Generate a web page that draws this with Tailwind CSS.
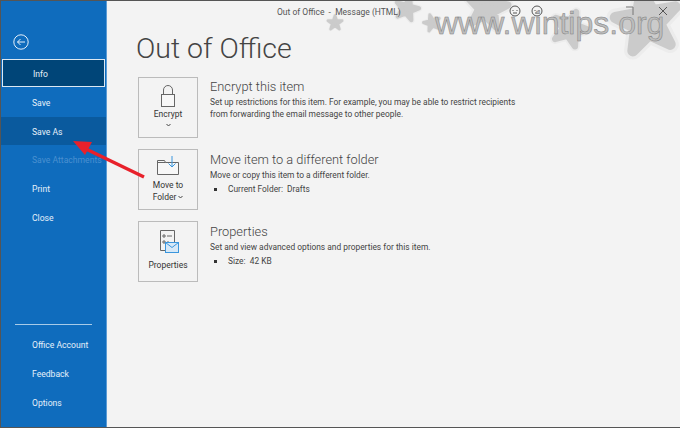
<!DOCTYPE html>
<html lang="en">
<head>
  <meta charset="UTF-8" />
  <title>Out of Office - Message (HTML)</title>
  <script src="https://cdn.jsdelivr.net/npm/@tailwindcss/browser@4"></script>
</head>
<body class="relative w-[680px] h-[428px] overflow-hidden bg-[#555] font-['Roboto',sans-serif] text-[#444]">
  <div class="flex h-[427px] border-t border-[#555] border-l bg-[#f3f3f3]">

    <!-- Sidebar -->
    <aside class="w-[106px] shrink-0 bg-[#0f6cbd] border-r border-[#5a9bd5] flex flex-col text-[8.6px] text-[#e6f0fa]">
      <div class="h-[58px] pt-[33px] pl-[12px]">
        <svg width="16" height="16" viewBox="0 0 16 16" fill="none" stroke="#e6f0fa" stroke-width="1">
          <circle cx="8" cy="8" r="7.2"/>
          <path d="M12 8H4.5M7.5 5L4.5 8l3 3"/>
        </svg>
      </div>
      <div class="mx-[1px] h-[28px] flex items-center pl-[30px] pt-[3px] bg-[#004578] border border-[#dce8f3]">Info</div>
      <div class="h-[30px] flex items-center pl-[31px] pt-[3px]">Save</div>
      <div class="h-[28px] flex items-center pl-[31px] pt-[3px] bg-[#0a5a9e]">Save As</div>
      <div class="h-[29px] flex items-center pl-[31px] pt-[1px] text-[#4a90d0] whitespace-nowrap">Save Attachments</div>
      <div class="h-[29px] flex items-center pl-[31px] pt-[1px]">Print</div>
      <div class="h-[29px] flex items-center pl-[31px] pt-[1px]">Close</div>
      <div class="mt-auto mx-[14px] h-[1px] bg-[#a8cbe8] mb-[5px]"></div>
      <div class="h-[29px] flex items-center pl-[31px] pt-[2px]">Office Account</div>
      <div class="h-[29px] flex items-center pl-[31px] pt-[2px]">Feedback</div>
      <div class="h-[29px] flex items-center pl-[31px] pt-[2px] mb-[10px]">Options</div>
    </aside>

    <!-- Main -->
    <main class="flex-1 pl-[29px]">
      <h1 class="mt-[27px] h-[49px] text-[28.5px] leading-[42px] font-light text-[#444]">Out of Office</h1>

      <section class="flex gap-[12px] h-[72px] ml-[2px]">
        <div class="w-[60px] h-[61px] border border-[#bbb] flex flex-col items-center text-[8.5px] leading-[12px] text-[#333]">
          <svg class="mt-[7px]" width="16" height="22" viewBox="0 0 16 22" fill="none" stroke="#666" stroke-width="1">
            <rect x="1.5" y="9.5" width="13" height="12" fill="#f7f7f7"/>
            <path d="M3.5 9.5V5a4.5 4.5 0 0 1 9 0v4.5"/>
          </svg>
          <span class="mt-[1px]">Encrypt</span>
          <svg width="5" height="4" viewBox="0 0 5 4" fill="none" stroke="#444" class="mt-[3px]"><path d="M.5 1l2 2 2-2"/></svg>
        </div>
        <div class="pt-[2px]">
          <h2 class="text-[12.8px] leading-[18px] font-light mt-[-1px]">Encrypt this item</h2>
          <p class="text-[8.4px] leading-[11.5px] mt-[1px]">Set up restrictions for this item. For example, you may be able to restrict recipients<br>from forwarding the email message to other people.</p>
        </div>
      </section>

      <section class="flex gap-[12px] h-[72px] ml-[2px]">
        <div class="w-[60px] h-[61px] border border-[#bbb] flex flex-col items-center text-[8.5px] leading-[11.5px] text-[#333]">
          <svg class="mt-[6px]" width="22" height="19" viewBox="0 0 22 19" fill="none" stroke="#666" stroke-width="1">
            <path d="M.5 18.5V4.5h7l1 2h13v12z" fill="#f7f7f7"/>
            <path d="M.5 6.5h8"/>
            <path d="M15 0v11M11.5 7.5L15 11l3.5-3.5" stroke="#3a96dd"/>
          </svg>
          <span class="mt-[5px]">Move to</span>
          <span class="flex items-center gap-[2px]">Folder <svg width="5" height="4" viewBox="0 0 5 4" fill="none" stroke="#444"><path d="M.5 1l2 2 2-2"/></svg></span>
        </div>
        <div class="pt-[2px]">
          <h2 class="text-[12.8px] leading-[18px] font-light">Move item to a different folder</h2>
          <p class="text-[8.4px] leading-[11.5px] mt-[1px]">Move or copy this item to a different folder.</p>
          <p class="text-[8.4px] leading-[11.5px] mt-[2px] flex items-center"><span class="w-[3px] h-[3px] bg-[#333] ml-[4px] mr-[11px]"></span>Current Folder:&nbsp;&nbsp;Drafts</p>
        </div>
      </section>

      <section class="flex gap-[12px] ml-[2px]">
        <div class="w-[60px] h-[61px] border border-[#bbb] flex flex-col items-center text-[8.5px] leading-[12px] text-[#333]">
          <svg class="mt-[8px] ml-[3px]" width="19" height="23" viewBox="0 0 19 23" fill="none" stroke="#666" stroke-width="1">
            <path d="M.5 20.5V.5h14v12"/>
            <path d="M.5 20.5h6"/>
            <path d="M3 5h2v2H3zM3 11h2v2H3zM7 6h5M7 12h2"/>
            <rect x="5.5" y="12.5" width="13" height="10" fill="#d6e8f7" stroke="#3a96dd"/>
            <path d="M5.5 12.5l6.5 5 6.5-5" stroke="#3a96dd"/>
          </svg>
          <span class="mt-[6px]">Properties</span>
        </div>
        <div class="pt-[2px]">
          <h2 class="text-[12.8px] leading-[18px] font-light">Properties</h2>
          <p class="text-[8.4px] leading-[11.5px] mt-[1px]">Set and view advanced options and properties for this item.</p>
          <p class="text-[8.4px] leading-[11.5px] mt-[2px] flex items-center"><span class="w-[3px] h-[3px] bg-[#333] ml-[4px] mr-[11px]"></span>Size:&nbsp;&nbsp;42 KB</p>
        </div>
      </section>
    </main>
  </div>

  <!-- Red arrow -->
  <svg class="absolute left-0 top-0" width="680" height="428" fill="none">
    <path d="M144 177L86 149" stroke="#e8212b" stroke-width="3.5"/>
    <path d="M73 141L92 142L85 155z" fill="#e8212b"/>
  </svg>

  <!-- Watermark stars -->
  <svg class="absolute left-[107px] top-[1px]" width="573" height="60" viewBox="107 1 573 60">
    <defs>
      <path id="star" stroke-linejoin="round" d="M0-10L2.4-3.2 9.5-3.1 3.8 1.200 5.900 8.100 0 4-5.900 8.100-3.800 1.200-9.500-3.100-2.400-3.200z"/>
      <g id="blob">
        <use href="#star" fill="#ececec" stroke="#ececec" stroke-width="5.5"/>
        <use href="#star" fill="#cbcbcb" stroke="#cbcbcb" stroke-width="3.5"/>
      </g>
    </defs>
    <use href="#blob" transform="translate(335 23) scale(.75)"/>
    <use href="#blob" transform="translate(407 9) rotate(15) scale(1.2)"/>
    <use href="#blob" transform="translate(432 23) rotate(-15) scale(.85)"/>
    <use href="#blob" transform="translate(487 8) rotate(10) scale(2.1)"/>
    <use href="#blob" transform="translate(570 29) rotate(20) scale(1.8)"/>
    <use href="#blob" transform="translate(647 22) rotate(-10) scale(3.2)"/>
  </svg>

  <!-- Title bar text -->
  <div class="absolute left-[277px] top-[6px] text-[8.5px] text-[#555]">Out of Office&nbsp; -&nbsp; Message (HTML)</div>

  <!-- Window controls -->
  <svg class="absolute left-[505px] top-[3px]" width="170" height="16" fill="none" stroke="#555">
    <circle cx="10" cy="8" r="5"/><circle cx="32" cy="8" r="5"/>
    <path d="M8 7v1M12 7v1M30 7v1M34 7v1M8 10h4M30 10h4"/>
    <path d="M121 4h7v8" stroke="#777"/>
    <path d="M154 4l8 8M162 4l-8 8"/>
  </svg>

  <!-- Watermark text -->
  <div class="absolute left-[435px] top-[5px] text-[32px] leading-[36px] font-['Liberation_Sans',sans-serif] text-[#bdbdbd] [-webkit-text-stroke:0.5px_#808080]">www.wintips.org</div>
</body>
</html>
